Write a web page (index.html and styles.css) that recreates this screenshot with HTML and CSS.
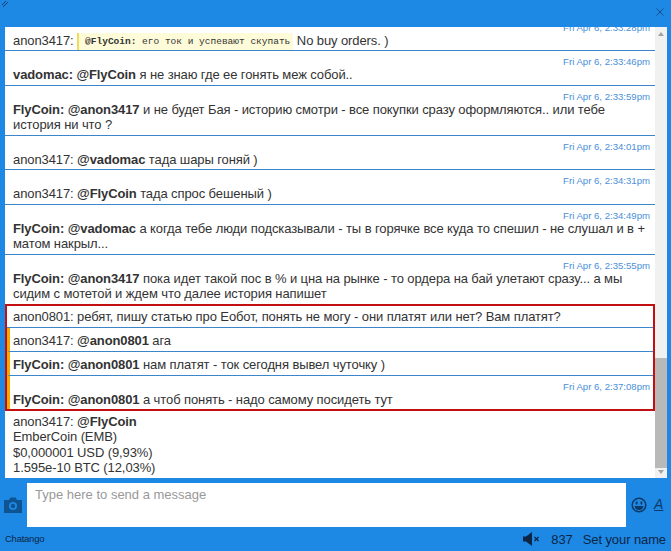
FILE: index.html
```html
<!DOCTYPE html>
<html lang="en">

<head>
    <meta charset="UTF-8">
    <title>Chatango</title>
    <link rel="stylesheet" href="styles.css">
</head>

<body>
    <div class="chat">
        <div class="top-bar">
            <svg class="resize" width="8" height="8" viewBox="0 0 8 8">
                <path d="M1 5 L5 1 M2 7 L7 2" stroke="#12406e" stroke-width="1" fill="none" />
            </svg>
            <svg class="close" width="8" height="8" viewBox="0 0 8 8">
                <path d="M0.500 0.500 L7.500 7.500 M7.500 0.500 L0.500 7.500" stroke="#14518c" stroke-width="1" fill="none" />
            </svg>
        </div>

        <div class="main">
            <div class="messages">
                <div class="msg">
                    <span class="stamp">Fri Apr 6, 2:33:28pm</span>
                    <div class="text">anon3417: <span class="quote"><b>@FlyCoin:</b> его ток и успевают скупать</span> No buy orders. )</div>
                </div>
                <div class="msg">
                    <span class="stamp">Fri Apr 6, 2:33:46pm</span>
                    <div class="text"><b>vadomac: @FlyCoin</b> я не знаю где ее гонять меж собой..</div>
                </div>
                <div class="msg">
                    <span class="stamp">Fri Apr 6, 2:33:59pm</span>
                    <div class="text"><b>FlyCoin: @anon3417</b> и не будет Бая - историю смотри - все покупки сразу оформляются.. или тебе история ни что ?</div>
                </div>
                <div class="msg">
                    <span class="stamp">Fri Apr 6, 2:34:01pm</span>
                    <div class="text">anon3417: <b>@vadomac</b> тада шары гоняй )</div>
                </div>
                <div class="msg">
                    <span class="stamp">Fri Apr 6, 2:34:31pm</span>
                    <div class="text">anon3417: <b>@FlyCoin</b> тада спрос бешеный )</div>
                </div>
                <div class="msg">
                    <span class="stamp">Fri Apr 6, 2:34:49pm</span>
                    <div class="text"><b>FlyCoin: @vadomac</b> а когда тебе люди подсказывали - ты в горячке все куда то спешил - не слушал и в + матом накрыл...</div>
                </div>
                <div class="msg no-line">
                    <span class="stamp">Fri Apr 6, 2:35:55pm</span>
                    <div class="text"><b>FlyCoin: @anon3417</b> пока идет такой пос в % и цна на рынке - то ордера на бай улетают сразу... а мы сидим с мотетой и ждем что далее история напишет</div>
                </div>

                <div class="highlight">
                    <div class="msg compact first">
                        <div class="text">anon0801: ребят, пишу статью про Еобот, понять не могу - они платят или нет? Вам платят?</div>
                    </div>
                    <div class="msg compact reply">
                        <div class="text">anon3417: <b>@anon0801</b> ага</div>
                    </div>
                    <div class="msg compact reply">
                        <div class="text"><b>FlyCoin: @anon0801</b> нам платят - ток сегодня вывел чуточку )</div>
                    </div>
                    <div class="msg reply end">
                        <span class="stamp">Fri Apr 6, 2:37:08pm</span>
                        <div class="text"><b>FlyCoin: @anon0801</b> а чтоб понять - надо самому посидеть тут</div>
                    </div>
                </div>

                <div class="msg info">
                    <div class="text">anon3417: <b>@FlyCoin</b><br>EmberCoin (EMB)<br>$0,000001 USD (9,93%)<br>1.595e-10 BTC (12,03%)</div>
                </div>
            </div>

            <div class="scrollbar">
                <span class="arrow arrow-up"></span>
                <span class="thumb"></span>
                <span class="arrow arrow-down"></span>
            </div>
        </div>

        <div class="input-row">
            <svg class="camera" width="18" height="16" viewBox="0 0 18 16">
                <path fill-rule="evenodd" fill="#0f5492" d="M0 3 H5 L6.500 0.500 H11.500 L13 3 H18 V16 H0 Z M9 5 A4 4 0 1 0 9 13 A4 4 0 1 0 9 5 Z M9 6.800 A2.200 2.200 0 1 1 9 11.200 A2.200 2.200 0 1 1 9 6.800 Z" />
            </svg>
            <div class="input">Type here to send a message</div>
            <svg class="smiley" width="16" height="16" viewBox="0 0 16 16">
                <circle cx="8" cy="8" r="6.800" fill="none" stroke="#0d3a66" stroke-width="1.500" />
                <ellipse cx="5.600" cy="6" rx="1" ry="1.700" fill="#0d3a66" />
                <ellipse cx="10.400" cy="6" rx="1" ry="1.700" fill="#0d3a66" />
                <path d="M3.600 9 H12.400 C12 12 10 13 8 13 C6 13 4 12 3.600 9 Z" fill="#0d3a66" />
            </svg>
            <span class="font-btn">A</span>
        </div>

        <div class="footer">
            <span class="brand">Chatango</span>
            <svg class="mute" width="17" height="14" viewBox="0 0 17 14">
                <path d="M0 4.500 H3 L9 0 V14 L3 9.500 H0 Z" fill="#0b2745" />
                <path d="M11.500 5 L15.500 9 M15.500 5 L11.500 9" stroke="#0b2745" stroke-width="1.300" fill="none" />
            </svg>
            <span class="count">837</span>
            <span class="name">Set your name</span>
        </div>
    </div>
</body>

</html>
```

FILE: styles.css
```css
html,
body {
    margin: 0;
    height: 100%;
    overflow: hidden;
}

body {
    font-family: 'Liberation Sans', Arial, sans-serif;
    font-size: 13px;
    color: #333;
    background-color: #1e88e5;
}

.chat {
    display: flex;
    flex-direction: column;
    height: 551px;
}

.top-bar {
    display: flex;
    justify-content: space-between;
    height: 27px;
    flex: none;
}

.resize {
    margin: 0 0 0 1px;
}

.close {
    margin: 8px 7px 0 0;
}

.main {
    display: flex;
    height: 451px;
    flex: none;
    padding: 0 4px 0 5px;
}

.messages {
    flex: 1;
    min-width: 0;
    display: flex;
    flex-direction: column;
    justify-content: flex-end;
    overflow: hidden;
    background-color: #ffffff;
}

.msg {
    flex: none;
    padding: 6px 5px 2px 8px;
    border-bottom: 1px solid #3a86c8;
    line-height: 15.500px;
}

.text {
    letter-spacing: -0.100px;
}

.no-line {
    border-bottom: none;
}

.stamp {
    display: block;
    height: 10px;
    line-height: 10px;
    text-align: right;
    font-size: 9.600px;
    color: #4a90d9;
}

.quote {
    display: inline-block;
    padding: 1px 3px 0 6px;
    height: 17px;
    margin-bottom: -2px;
    line-height: 16px;
    box-sizing: border-box;
    vertical-align: top;
    letter-spacing: 0;
    font-family: 'Liberation Mono', monospace;
    font-size: 9.500px;
    background-color: #fdfbd8;
    border-left: 2px solid #f2dc5d;
}

.highlight {
    flex: none;
    border: 2px solid #c40f12;
}

.highlight .msg {
    padding-right: 3px;
}

.compact {
    padding-top: 4.500px;
    padding-bottom: 3px;
}

.first {
    padding-left: 6px;
    padding-top: 3px;
}

.reply {
    padding-left: 3px;
    border-left: 3px solid #f5a800;
}

.highlight .end {
    padding-bottom: 1px;
    border-bottom: none;
}

.info {
    padding: 3px 5px 2.500px 8px;
    border-bottom: none;
}

.scrollbar {
    flex: none;
    width: 12px;
    display: flex;
    flex-direction: column;
    background-color: #f1f1f1;
}

.arrow {
    flex: none;
    width: 0;
    height: 0;
    margin: 5px auto 4px;
    border-left: 3px solid transparent;
    border-right: 3px solid transparent;
}

.arrow-up {
    border-bottom: 4px solid #a3a3a3;
}

.arrow-down {
    margin: 2px auto 4px;
    border-top: 4px solid #a3a3a3;
}

.thumb {
    flex: none;
    height: 110px;
    margin-top: auto;
    background-color: #b9b9b9;
}

.input-row {
    display: flex;
    align-items: flex-start;
    height: 44px;
    flex: none;
    margin-top: 5px;
}

.camera {
    flex: none;
    margin: 14px 5px 0 4px;
}

.input {
    flex: none;
    width: 599px;
    height: 44px;
    padding: 4px 8px;
    box-sizing: border-box;
    background-color: #ffffff;
    color: #999;
}

.smiley {
    flex: none;
    margin: 14px 0 0 5px;
}

.font-btn {
    margin: 13px 0 0 7px;
    font-size: 14px;
    font-style: italic;
    text-decoration: underline;
    color: #0d3a66;
}

.footer {
    display: flex;
    align-items: center;
    flex: 1;
    padding: 0 5px;
    letter-spacing: -0.100px;
}

.brand {
    margin-right: auto;
    margin-bottom: 2px;
    font-size: 9.500px;
    letter-spacing: -0.250px;
    color: #0b2745;
}

.mute {
    margin-right: 11px;
}

.count {
    margin-right: 10px;
    color: #0b2745;
}

.name {
    color: #0b2745;
}
```
